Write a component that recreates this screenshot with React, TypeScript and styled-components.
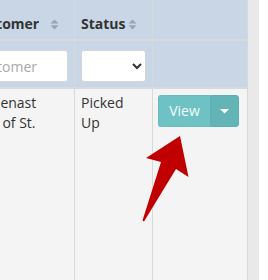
import React from "react";
import styled, { createGlobalStyle } from "styled-components";

const Global = createGlobalStyle`
  html, body { margin: 0; padding: 0; background: #ffffff; }
  body { font-family: "Open Sans", "Liberation Sans", sans-serif; color: #333333; }
  * { box-sizing: border-box; }
`;

const Viewport = styled.div`
  position: relative;
  width: 268px;
  height: 280px;
  overflow: hidden;
  background: #ffffff;
`;

const Panel = styled.div`
  width: 259px;
  height: 280px;
  overflow: hidden;
  background: #e9e9e9;
`;

const Grid = styled.div`
  display: grid;
  grid-template-columns: 112px 77px 94px;
  grid-template-rows: 39px 46px 1fr;
  column-gap: 1px;
  row-gap: 2px;
  width: 286px;
  height: 280px;
  margin-left: -38px;
  background: #d8d9db;
  border-right: 1px solid #d8d9db;
`;

const HeadCell = styled.div<{ $left?: number }>`
  display: flex;
  align-items: center;
  justify-content: space-between;
  padding: 14px 15px 5px ${(p) => p.$left ?? 6}px;
  background: #c9d6e6;
  font-weight: 700;
  font-size: 14px;
  line-height: 20px;
  color: #333333;
  white-space: nowrap;
`;

const FilterCell = styled.div`
  padding: 9px 6px 5px 6px;
  background: #c9d6e6;
`;

const BodyCell = styled.div<{ $top?: number; $left?: number }>`
  padding: ${(p) => p.$top ?? 4}px 6px 0 ${(p) => p.$left ?? 6}px;
  background: #f4f4f4;
  font-size: 14px;
  line-height: 20px;
  color: #333333;
`;

const TextInput = styled.input`
  display: block;
  width: 100%;
  height: 32px;
  padding: 0 0 0 4px;
  border: 1px solid #d6d6d6;
  border-radius: 3px;
  background: #ffffff;
  font-family: "Open Sans", "Liberation Sans", sans-serif;
  font-size: 14px;
  color: #333333;
  outline: none;
  &::placeholder { color: #a9a9a9; }
`;

const Select = styled.select`
  display: block;
  width: 100%;
  height: 32px;
  border: 1px solid #d6d6d6;
  border-radius: 3px;
  background: #ffffff;
  font-family: "Open Sans", "Liberation Sans", sans-serif;
  font-size: 14px;
  color: #333333;
  outline: none;
`;

const Lines = styled.div`
  white-space: nowrap;
`;

const BtnGroup = styled.div`
  display: flex;
  height: 32px;
`;

const ViewBtn = styled.button`
  width: 52px;
  height: 32px;
  border: 1px solid #68bcbe;
  border-right: none;
  border-radius: 3px 0 0 3px;
  background: #6fc2c4;
  color: #f4fbfb;
  font-family: "Open Sans", "Liberation Sans", sans-serif;
  font-size: 14px;
  line-height: 20px;
  padding: 0;
`;

const CaretBtn = styled.button`
  display: flex;
  align-items: center;
  justify-content: center;
  width: 29px;
  height: 32px;
  border: 1px solid #5cb0b2;
  border-radius: 0 3px 3px 0;
  background: #62b4b6;
  padding: 0;
`;

const Overlay = styled.svg`
  position: absolute;
  left: 0;
  top: 0;
  pointer-events: none;
`;

const SortIcon = () => (
  <svg width="9" height="11" viewBox="0 0 9 11">
    <path d="M4.5 0.5 L8.5 4.5 L0.5 4.5 Z" fill="#9ea4ad" />
    <path d="M0.5 6.3 L8.5 6.3 L4.5 10.5 Z" fill="#9ea4ad" />
  </svg>
);

export default function App() {
  return (
    <Viewport>
      <Global />
      <Panel>
        <Grid>
          <HeadCell $left={9}>
            <span>Customer</span>
            <SortIcon />
          </HeadCell>
          <HeadCell>
            <span>Status</span>
            <SortIcon />
          </HeadCell>
          <HeadCell />

          <FilterCell>
            <TextInput placeholder="Customer" />
          </FilterCell>
          <FilterCell>
            <Select defaultValue="">
              <option value=""></option>
              <option value="picked">Picked Up</option>
            </Select>
          </FilterCell>
          <FilterCell />

          <BodyCell $left={4}>
            <Lines>
              Condenast
              <br />
              Bank of St.
            </Lines>
          </BodyCell>
          <BodyCell>
            Picked
            <br />
            Up
          </BodyCell>
          <BodyCell $top={6} $left={5}>
            <BtnGroup>
              <ViewBtn>View</ViewBtn>
              <CaretBtn>
                <svg width="9" height="5" viewBox="0 0 9 5">
                  <path d="M0 0 L9 0 L4.5 4.5 Z" fill="#ffffff" />
                </svg>
              </CaretBtn>
            </BtnGroup>
          </BodyCell>
        </Grid>
      </Panel>
      <Overlay width="268" height="280" viewBox="0 0 268 280">
        <polygon
          points="180,136 188.5,177 176,169 144,221.5 142.5,220.5 161,162 146,158"
          fill="#c00000"
        />
      </Overlay>
    </Viewport>
  );
}
